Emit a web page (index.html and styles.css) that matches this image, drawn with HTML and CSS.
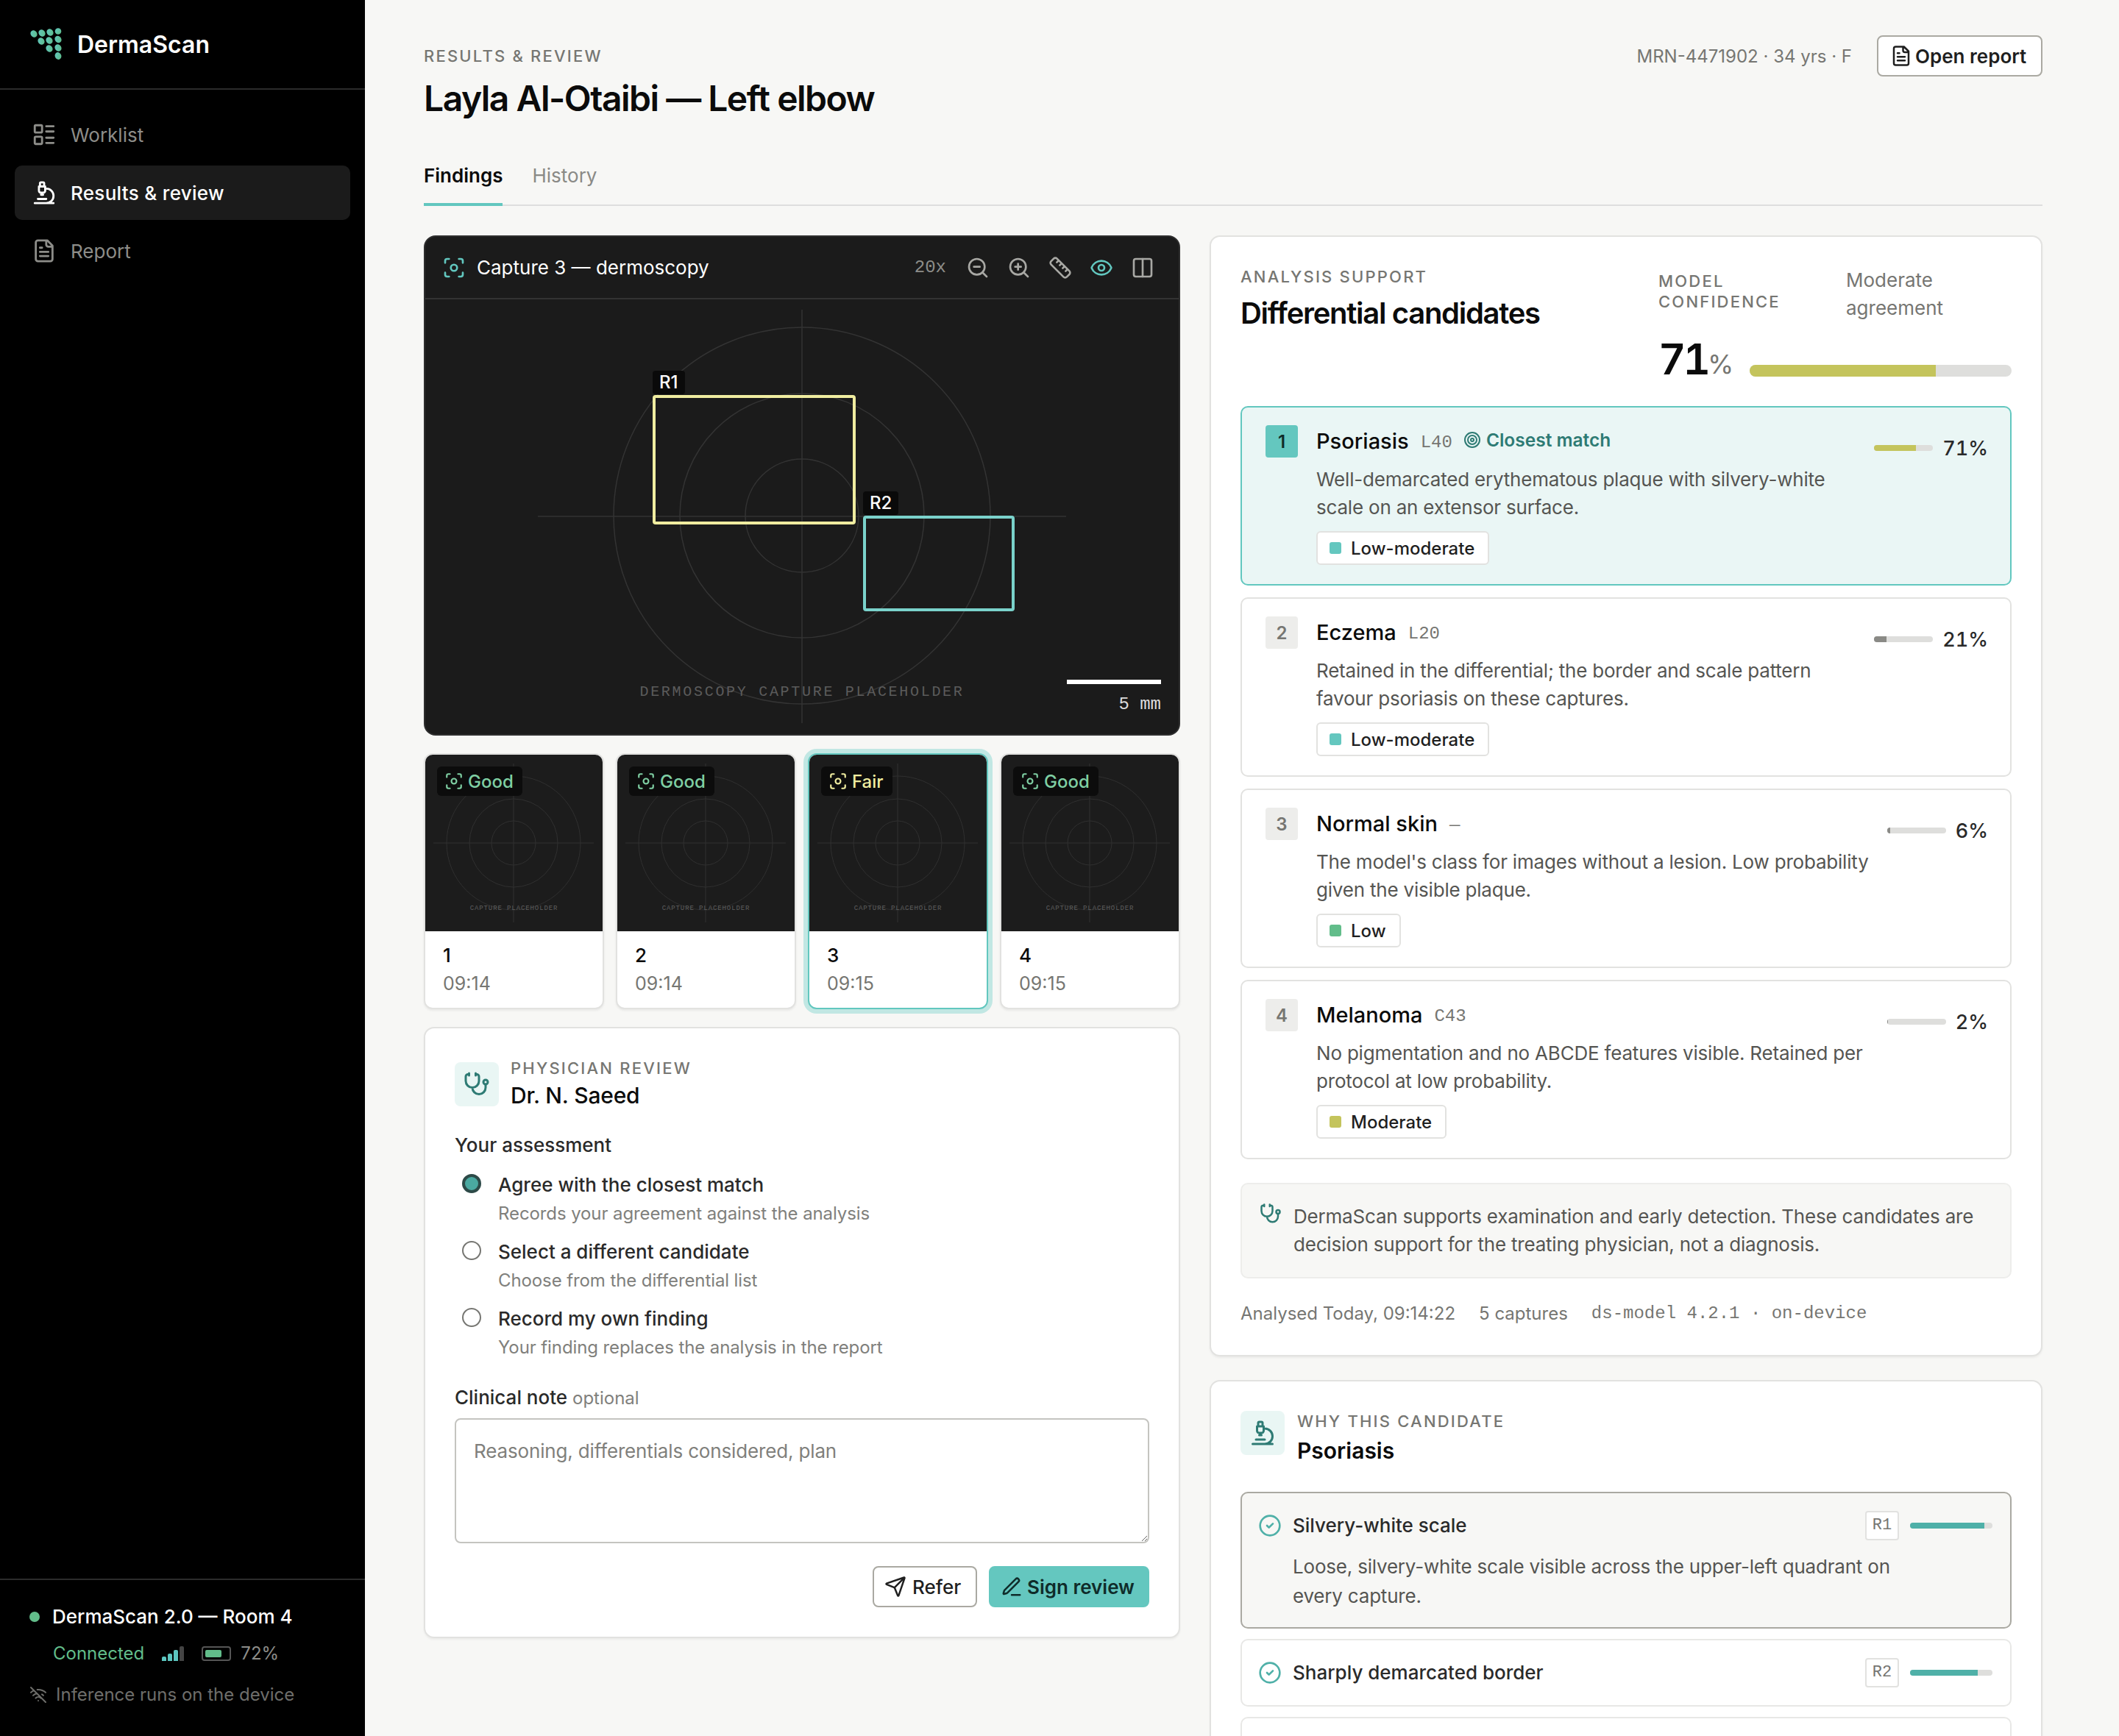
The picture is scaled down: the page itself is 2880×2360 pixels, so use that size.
FILE: index.html
```html
<!DOCTYPE html>
<html lang="en">
<head>
  <meta charset="UTF-8">
  <meta name="viewport" content="width=device-width, initial-scale=1.0">
  <title>DermaScan - Results & review</title>
  <link rel="stylesheet" href="styles.css">
</head>
<body>
  <!-- Icon sprite -->
  <svg class="sprite" xmlns="http://www.w3.org/2000/svg">
    <defs>
      <symbol id="i-list" viewBox="0 0 24 24"><rect x="3" y="3" width="7" height="7" rx="1"/><rect x="3" y="14" width="7" height="7" rx="1"/><path d="M14 4h7M14 9h7M14 15h7M14 20h7"/></symbol>
      <symbol id="i-microscope" viewBox="0 0 24 24"><path d="M6 18h8M3 22h18M14 22a7 7 0 1 0 0-14h-1M9 14h2M9 12a2 2 0 0 1-2-2V6h6v4a2 2 0 0 1-2 2ZM12 6V3a1 1 0 0 0-1-1H9a1 1 0 0 0-1 1v3"/></symbol>
      <symbol id="i-file" viewBox="0 0 24 24"><path d="M15 2H6a2 2 0 0 0-2 2v16a2 2 0 0 0 2 2h12a2 2 0 0 0 2-2V7ZM14 2v4a2 2 0 0 0 2 2h4M10 9H8M16 13H8M16 17H8"/></symbol>
      <symbol id="i-wifi-off" viewBox="0 0 24 24"><path d="M12 20h.01M8.5 16.429a5 5 0 0 1 7 0M5 12.859a10 10 0 0 1 5.17-2.69M19 12.859a10 10 0 0 0-2.007-1.523M2 8.82a15 15 0 0 1 4.177-2.643M22 8.82a15 15 0 0 0-11.288-3.764M2 2l20 20"/></symbol>
      <symbol id="i-scan" viewBox="0 0 24 24"><path d="M3 7V5a2 2 0 0 1 2-2h2M17 3h2a2 2 0 0 1 2 2v2M21 17v2a2 2 0 0 1-2 2h-2M7 21H5a2 2 0 0 1-2-2v-2"/><circle cx="12" cy="12" r="3.2"/></symbol>
      <symbol id="i-zoom-out" viewBox="0 0 24 24"><circle cx="11" cy="11" r="8"/><path d="M21 21l-4.35-4.35M8 11h6"/></symbol>
      <symbol id="i-zoom-in" viewBox="0 0 24 24"><circle cx="11" cy="11" r="8"/><path d="M21 21l-4.35-4.35M11 8v6M8 11h6"/></symbol>
      <symbol id="i-ruler" viewBox="0 0 24 24"><path d="M21.3 15.3a2.4 2.4 0 0 1 0 3.4l-2.6 2.6a2.4 2.4 0 0 1-3.4 0L2.7 8.7a2.41 2.41 0 0 1 0-3.4l2.6-2.6a2.41 2.41 0 0 1 3.4 0ZM14.5 12.5l2-2M11.5 9.5l2-2M8.5 6.5l2-2M17.5 15.5l2-2"/></symbol>
      <symbol id="i-eye" viewBox="0 0 24 24"><path d="M2.062 12.348a1 1 0 0 1 0-.696 10.75 10.75 0 0 1 19.876 0 1 1 0 0 1 0 .696 10.75 10.75 0 0 1-19.876 0"/><circle cx="12" cy="12" r="3"/></symbol>
      <symbol id="i-columns" viewBox="0 0 24 24"><rect x="3" y="3" width="18" height="18" rx="2"/><path d="M12 3v18"/></symbol>
      <symbol id="i-stethoscope" viewBox="0 0 24 24"><path d="M11 2v2M5 2v2M5 3H4a2 2 0 0 0-2 2v4a6 6 0 0 0 12 0V5a2 2 0 0 0-2-2h-1M8 15a6 6 0 0 0 12 0v-3"/><circle cx="20" cy="10" r="2"/></symbol>
      <symbol id="i-send" viewBox="0 0 24 24"><path d="M14.536 21.686a.5.5 0 0 0 .937-.024l6.5-19a.496.496 0 0 0-.635-.635l-19 6.5a.5.5 0 0 0-.024.937l7.93 3.18a2 2 0 0 1 1.112 1.11zM21.854 2.147l-10.94 10.939"/></symbol>
      <symbol id="i-pen" viewBox="0 0 24 24"><path d="M12 21h9M16.376 3.622a1 1 0 0 1 3.002 3.002L7.368 18.635a2 2 0 0 1-.855.506l-2.872.838a.5.5 0 0 1-.62-.62l.838-2.872a2 2 0 0 1 .506-.854z"/></symbol>
      <symbol id="i-target" viewBox="0 0 24 24"><circle cx="12" cy="12" r="10"/><circle cx="12" cy="12" r="6"/><circle cx="12" cy="12" r="2"/></symbol>
      <symbol id="i-check" viewBox="0 0 24 24"><circle cx="12" cy="12" r="10"/><path d="M9 12l2 2 4-4"/></symbol>
      <symbol id="i-placeholder" viewBox="0 0 240 240">
        <circle cx="120" cy="120" r="91"/><circle cx="120" cy="120" r="60"/><circle cx="120" cy="120" r="30"/>
        <path d="M11 120H229M120 12V228"/>
      </symbol>
      <linearGradient id="logo-fill" x1="0" y1="0" x2="1" y2="1">
        <stop offset="0" stop-color="#62c9c4"/>
        <stop offset="1" stop-color="#5dbb84"/>
      </linearGradient>
    </defs>
  </svg>

  <div class="app">
    <!-- Sidebar -->
    <aside class="sidebar">
      <div class="brand">
        <svg class="brand-logo" viewBox="0 0 44 44" fill="url(#logo-fill)">
          <g>
            <ellipse cx="5" cy="8" rx="4.3" ry="5" transform="rotate(-40 5 8)"/>
            <ellipse cx="16" cy="7" rx="4.3" ry="5" transform="rotate(-40 16 7)"/>
            <ellipse cx="27" cy="6" rx="4.3" ry="5" transform="rotate(-40 27 6)"/>
            <circle cx="38" cy="4.5" r="4.3"/>
            <ellipse cx="15" cy="18" rx="4.3" ry="5" transform="rotate(-40 15 18)"/>
            <ellipse cx="26" cy="17" rx="4.3" ry="5" transform="rotate(-40 26 17)"/>
            <ellipse cx="38" cy="15.5" rx="4.3" ry="5" transform="rotate(-40 38 15.5)"/>
            <ellipse cx="26" cy="28" rx="4.3" ry="5" transform="rotate(-40 26 28)"/>
            <ellipse cx="38" cy="27" rx="4.3" ry="5" transform="rotate(-40 38 27)"/>
            <ellipse cx="38" cy="38" rx="4.3" ry="5" transform="rotate(-20 38 38)"/>
          </g>
        </svg>
        <span class="brand-name">DermaScan</span>
      </div>
      <nav class="nav">
        <a class="nav-item"><svg class="icon icon-34"><use href="#i-list"/></svg>Worklist</a>
        <a class="nav-item active"><svg class="icon icon-34"><use href="#i-microscope"/></svg>Results &amp; review</a>
        <a class="nav-item"><svg class="icon icon-34"><use href="#i-file"/></svg>Report</a>
      </nav>
      <div class="device">
        <div class="device-name"><span class="device-dot"></span>DermaScan 2.0 — Room 4</div>
        <div class="device-status">
          <span class="connected">Connected</span>
          <span class="signal"><i></i><i></i><i></i><i></i></span>
          <span class="battery"><i></i></span>
          <span>72%</span>
        </div>
        <div class="device-note"><svg class="icon icon-24"><use href="#i-wifi-off"/></svg>Inference runs on the device</div>
      </div>
    </aside>

    <main class="main">
      <header class="page-head">
        <div>
          <div class="eyebrow">RESULTS &amp; REVIEW</div>
          <h1>Layla Al-Otaibi — Left elbow</h1>
        </div>
        <div class="page-meta">
          <span class="mrn">MRN-4471902 · 34 yrs · F</span>
          <button class="btn btn-open"><svg class="icon icon-30"><use href="#i-file"/></svg>Open report</button>
        </div>
      </header>

      <div class="tabs">
        <a class="tab active">Findings</a>
        <a class="tab">History</a>
      </div>

      <div class="columns">
        <!-- Left column -->
        <div class="col">
          <section class="viewer">
            <div class="viewer-head">
              <svg class="icon icon-32 teal"><use href="#i-scan"/></svg>
              <span class="viewer-title">Capture 3 — dermoscopy</span>
              <span class="viewer-zoom">20x</span>
              <svg class="icon icon-32 tool"><use href="#i-zoom-out"/></svg>
              <svg class="icon icon-32 tool"><use href="#i-zoom-in"/></svg>
              <svg class="icon icon-32 tool"><use href="#i-ruler"/></svg>
              <svg class="icon icon-32 tool teal"><use href="#i-eye"/></svg>
              <svg class="icon icon-32 tool"><use href="#i-columns"/></svg>
            </div>
            <div class="canvas">
              <svg class="canvas-art" viewBox="0 0 1024 592">
                <circle cx="512" cy="294" r="256"/><circle cx="512" cy="294" r="166"/><circle cx="512" cy="294" r="77"/>
                <path d="M153 295H871M512 14V576"/>
                <text x="512" y="539">DERMOSCOPY CAPTURE PLACEHOLDER</text>
              </svg>
              <div class="region region-1"><span class="region-tag">R1</span></div>
              <div class="region region-2"><span class="region-tag">R2</span></div>
              <div class="scalebar"><i></i><span>5 mm</span></div>
            </div>
          </section>

          <div class="thumbs">
            <div class="thumb">
              <div class="thumb-img">
                <svg class="thumb-art"><use href="#i-placeholder"/></svg>
                <span class="thumb-text">CAPTURE PLACEHOLDER</span>
                <span class="quality good"><svg class="icon icon-26"><use href="#i-scan"/></svg>Good</span>
              </div>
              <div class="thumb-info"><div class="thumb-num">1</div><div class="thumb-time">09:14</div></div>
            </div>
            <div class="thumb">
              <div class="thumb-img">
                <svg class="thumb-art"><use href="#i-placeholder"/></svg>
                <span class="thumb-text">CAPTURE PLACEHOLDER</span>
                <span class="quality good"><svg class="icon icon-26"><use href="#i-scan"/></svg>Good</span>
              </div>
              <div class="thumb-info"><div class="thumb-num">2</div><div class="thumb-time">09:14</div></div>
            </div>
            <div class="thumb selected">
              <div class="thumb-img">
                <svg class="thumb-art"><use href="#i-placeholder"/></svg>
                <span class="thumb-text">CAPTURE PLACEHOLDER</span>
                <span class="quality fair"><svg class="icon icon-26"><use href="#i-scan"/></svg>Fair</span>
              </div>
              <div class="thumb-info"><div class="thumb-num">3</div><div class="thumb-time">09:15</div></div>
            </div>
            <div class="thumb">
              <div class="thumb-img">
                <svg class="thumb-art"><use href="#i-placeholder"/></svg>
                <span class="thumb-text">CAPTURE PLACEHOLDER</span>
                <span class="quality good"><svg class="icon icon-26"><use href="#i-scan"/></svg>Good</span>
              </div>
              <div class="thumb-info"><div class="thumb-num">4</div><div class="thumb-time">09:15</div></div>
            </div>
          </div>

          <section class="card review">
            <div class="card-head">
              <span class="icon-box review-box"><svg class="icon icon-36"><use href="#i-stethoscope"/></svg></span>
              <div>
                <div class="eyebrow small">PHYSICIAN REVIEW</div>
                <div class="doctor">Dr. N. Saeed</div>
              </div>
            </div>
            <div class="field-label assess">Your assessment</div>
            <label class="option">
              <input class="radio" type="radio" name="assessment" checked>
              <span><span class="option-title">Agree with the closest match</span><span class="option-sub">Records your agreement against the analysis</span></span>
            </label>
            <label class="option">
              <input class="radio" type="radio" name="assessment">
              <span><span class="option-title">Select a different candidate</span><span class="option-sub">Choose from the differential list</span></span>
            </label>
            <label class="option">
              <input class="radio" type="radio" name="assessment">
              <span><span class="option-title">Record my own finding</span><span class="option-sub">Your finding replaces the analysis in the report</span></span>
            </label>
            <div class="field-label note-label">Clinical note <span class="optional">optional</span></div>
            <textarea class="note-input" placeholder="Reasoning, differentials considered, plan"></textarea>
            <div class="actions">
              <button class="btn btn-refer"><svg class="icon icon-30"><use href="#i-send"/></svg>Refer</button>
              <button class="btn btn-sign"><svg class="icon icon-30"><use href="#i-pen"/></svg>Sign review</button>
            </div>
          </section>
        </div>

        <!-- Right column -->
        <div class="col col-right">
          <section class="card analysis">
            <div class="analysis-head">
              <div class="analysis-title">
                <div class="eyebrow small">ANALYSIS SUPPORT</div>
                <h2>Differential candidates</h2>
              </div>
              <div class="confidence">
                <div class="confidence-top">
                  <div class="eyebrow small confidence-label">MODEL CONFIDENCE</div>
                  <div class="confidence-note">Moderate agreement</div>
                </div>
                <div class="confidence-score">
                  <span class="score-num">71</span><span class="score-unit">%</span>
                  <span class="bar bar-large"><i class="fill-olive" style="width: 71%"></i></span>
                </div>
              </div>
            </div>

            <div class="candidates">
              <article class="cand top">
                <span class="rank">1</span>
                <div class="cand-body">
                  <div class="cand-name"><b>Psoriasis</b><code>L40</code><span class="closest"><svg class="icon icon-24"><use href="#i-target"/></svg>Closest match</span></div>
                  <p>Well-demarcated erythematous plaque with silvery-white scale on an extensor surface.</p>
                  <span class="risk"><i class="dot-teal"></i>Low-moderate</span>
                </div>
                <div class="cand-score"><span class="bar"><i class="fill-olive" style="width: 71%"></i></span>71%</div>
              </article>
              <article class="cand">
                <span class="rank">2</span>
                <div class="cand-body">
                  <div class="cand-name"><b>Eczema</b><code>L20</code></div>
                  <p>Retained in the differential; the border and scale pattern favour psoriasis on these captures.</p>
                  <span class="risk"><i class="dot-teal"></i>Low-moderate</span>
                </div>
                <div class="cand-score"><span class="bar"><i style="width: 21%"></i></span>21%</div>
              </article>
              <article class="cand">
                <span class="rank">3</span>
                <div class="cand-body">
                  <div class="cand-name"><b>Normal skin</b><code>—</code></div>
                  <p>The model's class for images without a lesion. Low probability given the visible plaque.</p>
                  <span class="risk"><i class="dot-green"></i>Low</span>
                </div>
                <div class="cand-score"><span class="bar"><i style="width: 6%"></i></span>6%</div>
              </article>
              <article class="cand">
                <span class="rank">4</span>
                <div class="cand-body">
                  <div class="cand-name"><b>Melanoma</b><code>C43</code></div>
                  <p>No pigmentation and no ABCDE features visible. Retained per protocol at low probability.</p>
                  <span class="risk"><i class="dot-olive"></i>Moderate</span>
                </div>
                <div class="cand-score"><span class="bar"><i style="width: 2%"></i></span>2%</div>
              </article>
            </div>

            <div class="disclaimer">
              <svg class="icon icon-30"><use href="#i-stethoscope"/></svg>
              <p>DermaScan supports examination and early detection. These candidates are decision support for the treating physician, not a diagnosis.</p>
            </div>

            <div class="analysis-foot">
              <span>Analysed Today, 09:14:22</span>
              <span>5 captures</span>
              <code>ds-model 4.2.1 · on-device</code>
            </div>
          </section>

          <section class="card why">
            <div class="card-head">
              <span class="icon-box why-box"><svg class="icon icon-36"><use href="#i-microscope"/></svg></span>
              <div>
                <div class="eyebrow small">WHY THIS CANDIDATE</div>
                <div class="why-name">Psoriasis</div>
              </div>
            </div>
            <div class="reasons">
              <div class="reason open">
                <div class="reason-row">
                  <svg class="icon icon-32 check"><use href="#i-check"/></svg>
                  <span class="reason-title">Silvery-white scale</span>
                  <code class="chip">R1</code>
                  <span class="bar bar-reason"><i class="fill-teal" style="width: 90%"></i></span>
                </div>
                <p>Loose, silvery-white scale visible across the upper-left quadrant on every capture.</p>
              </div>
              <div class="reason">
                <div class="reason-row">
                  <svg class="icon icon-32 check"><use href="#i-check"/></svg>
                  <span class="reason-title">Sharply demarcated border</span>
                  <code class="chip">R2</code>
                  <span class="bar bar-reason"><i class="fill-teal" style="width: 82%"></i></span>
                </div>
              </div>
              <div class="reason reason-cut"></div>
            </div>
          </section>
        </div>
      </div>
    </main>
  </div>
</body>
</html>
```

FILE: styles.css
```css
* {
  box-sizing: border-box;
}

html,
body {
  margin: 0;
  height: 100%;
}

body {
  font-family: Inter, "Liberation Sans", sans-serif;
  font-size: 26px;
  color: #0b0b0b;
  background-color: #f7f7f5;
  overflow: hidden;
}

code {
  font-family: "Liberation Mono", monospace;
}

p {
  margin: 0;
  letter-spacing: -0.2px;
}

.sprite {
  position: absolute;
  width: 0;
  height: 0;
}

.icon {
  flex: none;
  fill: none;
  stroke: currentColor;
  stroke-width: 2;
  stroke-linecap: round;
  stroke-linejoin: round;
}

.icon-24 { width: 24px; height: 24px; }
.icon-26 { width: 26px; height: 26px; }
.icon-30 { width: 30px; height: 30px; }
.icon-32 { width: 32px; height: 32px; }
.icon-34 { width: 34px; height: 34px; }
.icon-36 { width: 36px; height: 36px; }

.app {
  display: flex;
  height: 2360px;
}

/* Sidebar */
.sidebar {
  width: 496px;
  flex: none;
  display: flex;
  flex-direction: column;
  background: #000;
  color: #8d8d89;
}

.brand {
  height: 122px;
  padding-left: 41px;
  display: flex;
  align-items: center;
  gap: 20px;
  border-bottom: 2px solid #2b2b2b;
}

.brand-logo {
  width: 44px;
  height: 44px;
}

.brand-name {
  font-size: 32px;
  font-weight: 600;
  color: #fff;
}

.nav {
  padding: 24px 20px;
  display: flex;
  flex-direction: column;
  gap: 5px;
}

.nav-item {
  height: 74px;
  padding-left: 23px;
  display: flex;
  align-items: center;
  gap: 19px;
  border-radius: 10px;
}

.nav-item.active {
  background: #1b1b1b;
  color: #fff;
  font-weight: 500;
  letter-spacing: 0.3px;
}

.device {
  margin-top: auto;
  padding: 30px 0 39px 40px;
  border-top: 2px solid #2b2b2b;
}

.device-name {
  display: flex;
  align-items: center;
  gap: 17px;
  line-height: 40px;
  color: #fff;
  font-weight: 500;
}

.device-dot {
  width: 14px;
  height: 14px;
  border-radius: 50%;
  background: #62bd8a;
}

.device-status {
  margin-top: 12px;
  padding-left: 32px;
  display: flex;
  align-items: center;
  line-height: 36px;
  font-size: 24px;
}

.connected {
  color: #62bd8a;
  margin-right: 24px;
}

.signal {
  display: flex;
  align-items: flex-end;
  gap: 2px;
  height: 20px;
  margin-right: 24px;
}

.signal i {
  width: 6px;
  border-radius: 2px 2px 0 0;
  background: #5cc6c0;
}

.signal i:nth-child(1) { height: 6px; }
.signal i:nth-child(2) { height: 10px; }
.signal i:nth-child(3) { height: 15px; }
.signal i:nth-child(4) { height: 20px; background: #444; }

.battery {
  width: 40px;
  height: 20px;
  margin-right: 13px;
  padding: 3px;
  border: 2px solid #555;
  border-radius: 4px;
}

.battery i {
  display: block;
  width: 72%;
  height: 100%;
  border-radius: 2px;
  background: #62bd8a;
}

.device-note {
  margin-top: 21px;
  display: flex;
  align-items: center;
  gap: 12px;
  line-height: 34px;
  font-size: 24px;
  color: #6e6e6b;
}

/* Main */
.main {
  width: 2280px;
  padding: 0 0 0 80px;
}

.page-head {
  display: flex;
  justify-content: space-between;
  padding-top: 48px;
}

.eyebrow {
  font-size: 22px;
  line-height: 28px;
  font-weight: 500;
  letter-spacing: 0.1em;
  color: #767672;
  padding-top: 14px;
}

.eyebrow.small {
  padding-top: 0;
}

h1 {
  margin: 14px 0 0;
  font-size: 48px;
  line-height: 60px;
  font-weight: 600;
  letter-spacing: -1.5px;
}

.page-meta {
  display: flex;
  align-items: center;
  gap: 34px;
  height: 56px;
}

.mrn {
  font-size: 24px;
  color: #767672;
}

.btn {
  height: 56px;
  display: inline-flex;
  align-items: center;
  font: 500 26px Inter, "Liberation Sans", sans-serif;
  border-radius: 8px;
  color: #1f1f1f;
  background: #fff;
  border: 2px solid #aaa9a2;
}

.btn-open {
  width: 225px;
  padding: 0 0 0 16px;
  gap: 4px;
  font-weight: 600;
}

.tabs {
  margin-top: 44px;
  display: flex;
  gap: 40px;
  height: 72px;
  border-bottom: 2px solid #dedede;
  width: 2200px;
}

.tab {
  height: 72px;
  line-height: 62px;
  color: #8a8a86;
}

.tab.active {
  color: #0b0b0b;
  font-weight: 600;
  border-bottom: 4px solid #62c7bf;
}

.columns {
  margin-top: 40px;
  width: 2200px;
  display: grid;
  grid-template-columns: 1028px 1fr;
  gap: 40px;
  align-items: start;
}

.col {
  display: flex;
  flex-direction: column;
  gap: 24px;
}

.col-right {
  gap: 32px;
}

/* Viewer */
.viewer {
  height: 680px;
  border: 2px solid #2e2e2e;
  border-radius: 16px;
  background: #1b1b1b;
  color: #fff;
  overflow: hidden;
}

.viewer-head {
  height: 85px;
  padding: 0 33px 0 23px;
  display: flex;
  align-items: center;
  border-bottom: 2px solid #333;
}

.viewer-head .teal {
  color: #62c7bf;
}

.viewer-title {
  margin-left: 15px;
  margin-right: auto;
}

.viewer-zoom {
  font-family: "Liberation Mono", monospace;
  font-size: 24px;
  color: #8d8d89;
  margin-right: 3px;
}

.tool {
  margin-left: 24px;
  color: #a8a8a4;
}

.canvas {
  position: relative;
  height: 591px;
}

.canvas-art {
  display: block;
  width: 1024px;
  height: 592px;
  fill: none;
  stroke: #333;
  stroke-width: 1.5;
}

.canvas-art text {
  fill: #5b5b5b;
  stroke: none;
  font-family: "Liberation Mono", monospace;
  font-size: 20px;
  letter-spacing: 2.7px;
  text-anchor: middle;
}

.region {
  position: absolute;
  border-radius: 4px;
}

.region-1 {
  left: 309px;
  top: 130px;
  width: 276px;
  height: 176px;
  border: 4px solid #f0eda0;
}

.region-2 {
  left: 595px;
  top: 294px;
  width: 206px;
  height: 130px;
  border: 4px solid #7ad2cb;
}

.region-tag {
  position: absolute;
  left: -4px;
  bottom: 100%;
  margin-bottom: 5px;
  padding: 0 9px;
  line-height: 32px;
  font-size: 24px;
  font-weight: 500;
  border-radius: 4px;
  background: #0a0a0a;
}

.scalebar {
  position: absolute;
  right: 24px;
  top: 517px;
  width: 128px;
  text-align: right;
}

.scalebar i {
  display: block;
  height: 6px;
  background: #fff;
}

.scalebar span {
  display: block;
  margin-top: 14px;
  font-family: "Liberation Mono", monospace;
  font-size: 24px;
  line-height: 28px;
  color: #dcdcdc;
}

/* Thumbnails */
.thumbs {
  display: grid;
  grid-template-columns: repeat(4, 1fr);
  gap: 16px;
}

.thumb {
  height: 348px;
  background: #fff;
  border: 2px solid #e2e2e0;
  border-radius: 12px;
  overflow: hidden;
  box-shadow: 0 2px 3px rgba(0, 0, 0, 0.06);
}

.thumb.selected {
  border-color: #62c7bf;
  box-shadow: 0 0 0 6px #c1e7e3;
}

.thumb-img {
  position: relative;
  height: 240px;
  background: #1c1c1c;
  overflow: hidden;
}

.thumb-art {
  display: block;
  width: 240px;
  height: 240px;
  fill: none;
  stroke: #303030;
  stroke-width: 1;
}

.thumb-text {
  position: absolute;
  left: 0;
  right: 0;
  top: 204px;
  text-align: center;
  font-family: "Liberation Mono", monospace;
  font-size: 9px;
  letter-spacing: 0.9px;
  color: #5f5f5f;
}

.quality {
  position: absolute;
  left: 16px;
  top: 16px;
  height: 40px;
  padding: 0 12px 0 10px;
  display: flex;
  align-items: center;
  gap: 6px;
  font-size: 24px;
  font-weight: 500;
  border-radius: 6px;
  background: #0c0c0c;
}

.quality.good { color: #7fcfa3; }
.quality.fair { color: #f0eda0; }

.thumb-info {
  padding: 14px 24px;
  line-height: 38px;
}

.thumb-num {
  font-weight: 500;
}

.thumb-time {
  font-size: 25px;
  color: #767672;
}

/* Cards */
.card {
  background: #fff;
  border: 2px solid #e2e2e0;
  border-radius: 14px;
  padding: 40px;
  box-shadow: 0 2px 3px rgba(0, 0, 0, 0.05);
}

.card-head {
  display: flex;
  gap: 17px;
}

.icon-box {
  width: 60px;
  height: 60px;
  flex: none;
  display: flex;
  align-items: center;
  justify-content: center;
  border-radius: 8px;
  background: #e9f6f4;
  color: #2e7b74;
}

.review .card-head {
  gap: 16px;
}

.review-box {
  margin-top: 6px;
}

.doctor {
  font-size: 30px;
  line-height: 46px;
  font-weight: 500;
  letter-spacing: -0.2px;
}

.field-label {
  line-height: 40px;
  color: #2a2a2a;
  font-weight: 500;
}

.assess {
  margin-top: 25px;
  margin-bottom: 14px;
}

.option {
  display: flex;
  gap: 23px;
  margin-bottom: 13px;
}

.radio {
  appearance: none;
  width: 26px;
  height: 26px;
  margin: 5px 0 0 10px;
  flex: none;
  border: 2px solid #767672;
  border-radius: 50%;
  background: #fff;
}

.radio:checked {
  border: 4px solid #2d4a48;
  background: #4aa9a1;
}

.option-title {
  display: block;
  line-height: 40px;
  color: #2a2a2a;
  font-weight: 500;
}

.option-sub {
  display: block;
  line-height: 38px;
  font-size: 24px;
  letter-spacing: -0.1px;
  color: #80807c;
}

.note-label {
  margin-top: 29px;
}

.optional {
  font-size: 24px;
  font-weight: 400;
  color: #80807c;
}

.note-input {
  display: block;
  width: 100%;
  height: 170px;
  margin-top: 7px;
  padding: 27px 24px 24px;
  font: 26px Inter, "Liberation Sans", sans-serif;
  letter-spacing: -0.15px;
  border: 2px solid #c4c4c0;
  border-radius: 8px;
  background: #fff;
}

.note-input::placeholder {
  color: #80807c;
}

.actions {
  margin-top: 31px;
  display: flex;
  justify-content: flex-end;
  gap: 16px;
}

.btn-refer {
  width: 142px;
  padding-left: 14px;
  gap: 8px;
}

.btn-sign {
  width: 218px;
  padding-left: 14px;
  gap: 6px;
  background: #64c7bf;
  border-color: #64c7bf;
  color: #0f2c2a;
  font-weight: 600;
}

/* Analysis card */
.analysis {
  padding-bottom: 38px;
}

.analysis-head {
  display: flex;
  justify-content: space-between;
}

h2 {
  margin: 8px 0 0;
  font-size: 40px;
  line-height: 56px;
  font-weight: 600;
  letter-spacing: -1.3px;
}

.confidence {
  width: 480px;
}

.confidence-top {
  display: flex;
  height: 94px;
}

.confidence-label {
  width: 255px;
  margin-top: 6px;
}

.confidence-note {
  width: 160px;
  line-height: 38px;
  color: #767672;
}

.confidence-score {
  height: 64px;
  display: flex;
  align-items: flex-end;
}

.score-num {
  font-size: 58px;
  line-height: 64px;
  font-weight: 600;
  letter-spacing: -4px;
  font-variant-numeric: tabular-nums;
}

.score-unit {
  font-size: 36px;
  line-height: 50px;
  color: #767672;
}

.bar {
  display: inline-block;
  flex: none;
  width: 80px;
  height: 8px;
  border-radius: 4px;
  background: #dededc;
  overflow: hidden;
}

.bar i {
  display: block;
  height: 100%;
  background: #8a8a86;
}

.bar .fill-olive { background: #c4c45c; }
.bar .fill-teal { background: #4fb0a8; }

.bar-large {
  flex: 1;
  height: 16px;
  border-radius: 8px;
  margin: 0 0 8px 22px;
}

.candidates {
  margin-top: 32px;
  display: flex;
  flex-direction: column;
  gap: 16px;
}

.cand {
  height: 244px;
  padding: 24px 30px 24px 32px;
  display: flex;
  gap: 25px;
  border: 2px solid #e2e2e0;
  border-radius: 10px;
  background: #fff;
}

.cand.top {
  border-color: #62c7bf;
  background: #eaf6f5;
}

.rank {
  width: 44px;
  height: 44px;
  flex: none;
  display: flex;
  align-items: center;
  justify-content: center;
  font-size: 24px;
  font-weight: 600;
  color: #767672;
  background: #ededeb;
  border-radius: 4px;
}

.top .rank {
  background: #64c7bf;
  color: #0f2c2a;
}

.cand-body {
  flex: 1;
  min-width: 0;
}

.cand-name {
  display: flex;
  align-items: center;
  height: 42px;
}

.cand-name b {
  font-size: 29px;
  font-weight: 500;
}

.cand-name code {
  margin: 5px 0 0 16px;
  font-size: 24px;
  color: #767672;
}

.closest {
  display: flex;
  align-items: center;
  gap: 7px;
  margin: -2px 0 0 15px;
  font-size: 24.5px;
  font-weight: 600;
  color: #2e7b74;
}

.cand-body p {
  margin-top: 13px;
  max-width: 752px;
  line-height: 38px;
  color: #555552;
}

.risk {
  margin-top: 13px;
  height: 46px;
  padding: 0 18px 0 16px;
  display: inline-flex;
  align-items: center;
  gap: 13px;
  font-size: 24px;
  font-weight: 500;
  color: #1f1f1f;
  background: #fff;
  border: 2px solid #e2e2e0;
  border-radius: 6px;
}

.risk i {
  width: 16px;
  height: 16px;
  border-radius: 3px;
}

.dot-teal { background: #64c7bf; }
.dot-green { background: #62bd8a; }
.dot-olive { background: #c4c45c; }

.cand-score {
  flex: none;
  margin: 12px 0 0 -12px;
  height: 38px;
  display: flex;
  align-items: center;
  gap: 13px;
  font-size: 27px;
  font-weight: 500;
  font-variant-numeric: tabular-nums;
  color: #2a2a2a;
}

.disclaimer {
  margin-top: 32px;
  padding: 25px 24px 25px;
  display: flex;
  gap: 16px;
  background: #f7f7f5;
  border: 2px solid #ededeb;
  border-radius: 10px;
  color: #2e7b74;
}

.disclaimer p {
  line-height: 38px;
  color: #555552;
}

.analysis-foot {
  margin-top: 30px;
  display: flex;
  gap: 32px;
  font-size: 24px;
  line-height: 36px;
  color: #767672;
}

/* Why card */
.why-name {
  font-size: 30px;
  line-height: 52px;
  font-weight: 600;
}

.reasons {
  margin-top: 30px;
  display: flex;
  flex-direction: column;
  gap: 14px;
}

.reason {
  padding: 24px 24px 24px 22px;
  border: 2px solid #e8e8e6;
  border-radius: 10px;
  background: #fff;
}

.reason.open {
  padding-bottom: 22px;
  border-color: #aaa9a2;
  background: #f7f7f5;
}

.reason-cut {
  height: 92px;
}

.reason-row {
  height: 40px;
  display: flex;
  align-items: center;
  gap: 15px;
}

.check {
  color: #4fb0a8;
}

.reason-title {
  margin: -2px auto 0 0;
  font-weight: 500;
  color: #2a2a2a;
}

.chip {
  width: 46px;
  height: 40px;
  line-height: 36px;
  text-align: center;
  font-size: 22px;
  color: #767672;
  background: #fff;
  border: 2px solid #e2e2e0;
  border-radius: 4px;
}

.bar-reason {
  width: 112px;
}

.reason p {
  margin: 16px 0 0 47px;
  max-width: 830px;
  line-height: 40px;
  color: #555552;
}
```
